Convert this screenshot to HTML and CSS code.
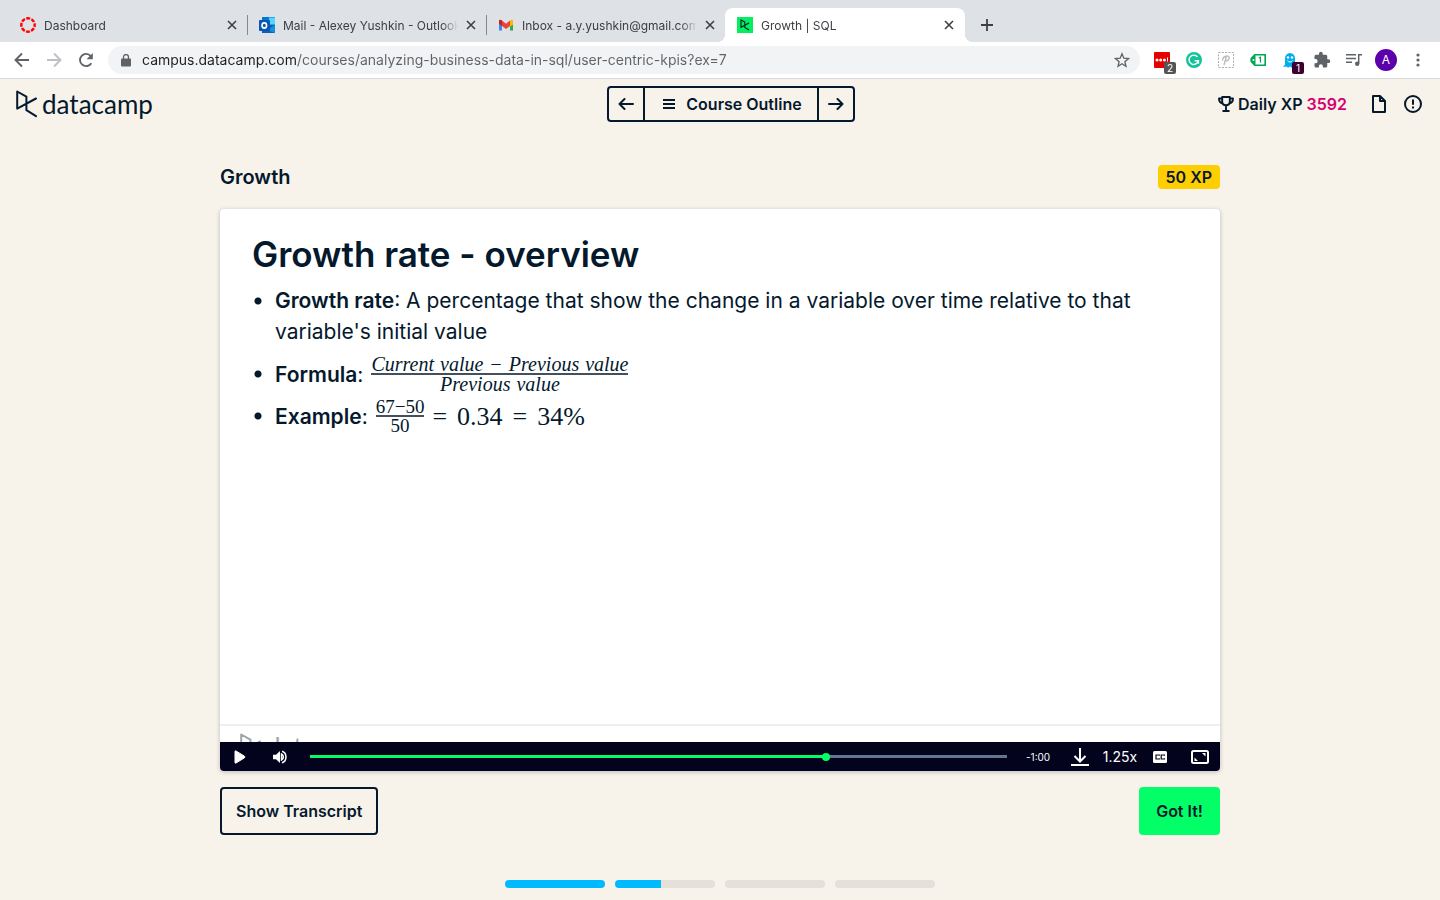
FILE: index.html
```html
<!DOCTYPE html>
<html lang="en">
<head>
<meta charset="utf-8">
<meta name="viewport" content="width=device-width, initial-scale=1">
<title>Growth | SQL</title>
<link rel="stylesheet" href="styles.css">
</head>
<body>
<svg class="defs" aria-hidden="true">
  <symbol id="mark" viewBox="0 0 22 28"><path d="M20 8.500 1.200 18.600V1.500l9.200 5.100v13.600l9.600 6" fill="none" stroke="currentColor" stroke-width="2" stroke-linejoin="round" stroke-linecap="round"/></symbol>
  <symbol id="close" viewBox="0 0 10 10"><path d="M1 1l8 8M9 1 1 9" stroke="currentColor" stroke-width="1.600" fill="none"/></symbol>
</svg>

<div class="tabs">
  <div class="tab">
    <svg class="tab-icon" viewBox="0 0 16 16"><circle cx="8" cy="8" r="6.700" fill="none" stroke="#f00" stroke-width="2.400" stroke-dasharray="3.900 1.360" stroke-dashoffset="1.950"/></svg>
    <button class="tab-name">Dashboard</button>
    <button class="tab-close" aria-label="Close Dashboard"><svg viewBox="0 0 10 10"><use href="#close"/></svg></button>
  </div>
  <div class="tab divided">
    <svg class="tab-icon" viewBox="0 0 16 16"><path fill="#28a8ea" d="M3 0h13v16H3z"/><path fill="#0078d4" d="M3 0h7v5H3z"/><path fill="#50d9ff" d="M10 1h6v6h-6z"/><path fill="#0f5fb5" d="M8 8h8v8H3v-3z"/><path fill="#1490df" d="m16 8-8 5 8 3z"/><rect y="3" width="11" height="11" rx="1" fill="#0a56b0"/><ellipse cx="5.300" cy="8.500" rx="2.300" ry="2.600" fill="none" stroke="#fff" stroke-width="1.600"/></svg>
    <button class="tab-name">Mail - Alexey Yushkin - Outlook</button>
    <button class="tab-close" aria-label="Close Mail"><svg viewBox="0 0 10 10"><use href="#close"/></svg></button>
  </div>
  <div class="tab divided">
    <svg class="tab-icon" viewBox="0 0 16 16"><path fill="#4285f4" d="M1 4v9.500h3V7z"/><path fill="#34a853" d="M15 4v9.500h-3V7z"/><path fill="#fbbc04" d="M12 4.200 15 3v4.500l-3 2z"/><path fill="#ea4335" d="M4 3.500 8 6.700l4-3.200V9L8 12 4 9z"/><path fill="#c5221f" d="M1 4c0-1.700 1.700-1.700 3-.5V9L1 6.800z"/><path fill="#fbbc04" d="M15 4c0-1.700-1.700-1.700-3-.5V9l3-2.200z"/></svg>
    <button class="tab-name">Inbox - a.y.yushkin@gmail.com</button>
    <button class="tab-close" aria-label="Close Inbox"><svg viewBox="0 0 10 10"><use href="#close"/></svg></button>
  </div>
  <div class="tab active">
    <svg class="tab-icon" viewBox="0 0 16 16"><path fill="#03ef62" d="M0 0h16v16H0z"/><path d="m12 6-8 4.300V3l3.800 2.100v5.300L12 13" fill="none" stroke="#05192d" stroke-width="1.100"/></svg>
    <button class="tab-name">Growth | SQL</button>
    <button class="tab-close" aria-label="Close Growth"><svg viewBox="0 0 10 10"><use href="#close"/></svg></button>
  </div>
  <button class="new-tab" aria-label="New tab"><svg viewBox="0 0 12 12"><path d="M6 0v12M0 6h12" stroke="currentColor" stroke-width="1.800"/></svg></button>
</div>

<div class="toolbar">
  <div class="tools">
    <button class="tool" aria-label="Back"><svg viewBox="0 0 16 16" width="16" height="16"><path d="M15 8H2M8 1.500 1.500 8 8 14.500" fill="none" stroke="currentColor" stroke-width="1.900"/></svg></button>
    <button class="tool faded" aria-label="Forward"><svg viewBox="0 0 16 16" width="16" height="16"><path d="M1 8h13M8 1.500 14.500 8 8 14.500" fill="none" stroke="currentColor" stroke-width="1.900"/></svg></button>
    <button class="tool" aria-label="Reload"><svg viewBox="0 0 16 16" width="16" height="16"><path d="M13.300 11.200A6.100 6.100 0 1 1 12.700 4" fill="none" stroke="currentColor" stroke-width="1.900"/><path d="M14.800 1v6.200H8.600z" fill="currentColor"/></svg></button>
  </div>
  <div class="omnibox">
    <svg viewBox="0 0 10 13" width="10" height="13"><rect y="4.500" width="10" height="8" rx="1" fill="#5f6368"/><path d="M2.500 5V3a2.500 2.500 0 0 1 5 0v2" fill="none" stroke="#5f6368" stroke-width="1.300"/></svg>
    <input class="url" type="text" aria-label="Address" value="campus.datacamp.com/courses/analyzing-business-data-in-sql/user-centric-kpis?ex=7">
    <button class="star" aria-label="Bookmark"><svg viewBox="0 0 16 16" width="16" height="16"><path d="m8 1.800 1.800 4.400 4.700.4-3.600 3.100 1.100 4.600L8 11.800l-4 2.500 1.100-4.600L1.500 6.600l4.700-.4z" fill="none" stroke="#5f6368" stroke-width="1.300"/></svg></button>
  </div>
  <div class="tools">
    <button class="tool" aria-label="Password manager"><svg viewBox="0 0 16 16" width="16" height="16"><rect width="16" height="16" rx="1" fill="#e60000"/><g fill="#fff"><circle cx="3" cy="8" r="1.500"/><circle cx="6.700" cy="8" r="1.500"/><circle cx="10.400" cy="8" r="1.500"/><path d="M13 5.500h1v4h-1z"/></g></svg><span class="count">2</span></button>
    <button class="tool" aria-label="Writing check"><svg viewBox="0 0 16 16" width="16" height="16"><circle cx="8" cy="8" r="8" fill="#15c39a"/><path d="M11.500 4.900A4.700 4.700 0 1 0 12.400 8.700H8.700M12.400 8.700v3" fill="none" stroke="#fff" stroke-width="1.400"/></svg></button>
    <button class="tool" aria-label="Page tool"><svg viewBox="0 0 16 16" width="16" height="16"><rect x=".5" y=".5" width="15" height="15" fill="none" stroke="#aaa" stroke-dasharray="2 1.300"/><path d="m6 13 2.300-8M4.600 8.600C4.300 3.800 11.600 2.600 11.300 6c-.2 2.800-3.200 3-4.300 2.500" fill="none" stroke="#bbb" stroke-width="1.400"/></svg></button>
    <button class="tool" aria-label="Tag tool"><svg viewBox="0 0 16 16" width="16" height="16"><path d="M4.800 2.800h10.400v10.400H4.800L1.200 9.400V6.600z" fill="#fff" stroke="#00a651" stroke-width="1.600"/><path d="M5.500 3v10L1 9.500v-3z" fill="#00a651"/><circle cx="3.500" cy="8" r="1" fill="#fff"/><path d="m8.800 6 1.600-.8v5.300" fill="none" stroke="#00a651" stroke-width="1.200"/></svg></button>
    <button class="tool" aria-label="Tracker blocker"><svg viewBox="0 0 16 16" width="16" height="16"><path d="M3 6.500a5 5.500 0 0 1 10 0V13l1 2-2.500-.5-1.700 1.300L8 14.500l-2 1.300-1.500-1.300L1 15l2-2.500z" fill="#00aef0"/><circle cx="6" cy="5.500" r="1.200" fill="#fff"/><circle cx="10" cy="5.500" r="1.200" fill="#fff"/><path d="M5.500 8.500c1 2 4 2 5 0" fill="none" stroke="#fff"/></svg><span class="count plum">1</span></button>
    <button class="tool" aria-label="Extensions"><svg viewBox="0 0 24 24" width="18" height="18"><path fill="currentColor" d="M20.500 11H19V7a2 2 0 0 0-2-2h-4V3.500a2.500 2.500 0 0 0-5 0V5H4a2 2 0 0 0-2 2v3.800h1.500a2.700 2.700 0 0 1 0 5.400H2V20a2 2 0 0 0 2 2h3.800v-1.500a2.700 2.700 0 0 1 5.400 0V22H17a2 2 0 0 0 2-2v-4h1.500a2.500 2.500 0 0 0 0-5z"/></svg></button>
    <button class="tool" aria-label="Media"><svg viewBox="0 0 16 16" width="16" height="16"><path d="M0 2.800h10M0 6.500h10M0 10.200h6" stroke="currentColor" stroke-width="1.500"/><path d="M12.700 11.500V2.800H16" fill="none" stroke="currentColor" stroke-width="1.500"/><circle cx="11.200" cy="11.800" r="2.200" fill="currentColor"/></svg></button>
    <button class="tool" aria-label="Profile"><span class="avatar">A</span></button>
    <button class="tool" aria-label="Menu"><svg viewBox="0 0 4 14" width="4" height="14"><g fill="currentColor"><circle cx="2" cy="2" r="1.600"/><circle cx="2" cy="7" r="1.600"/><circle cx="2" cy="12" r="1.600"/></g></svg></button>
  </div>
</div>

<header class="header">
  <a class="logo" href="#"><svg viewBox="0 0 22 28" width="22" height="28"><use href="#mark"/></svg><span>datacamp</span></a>
  <nav class="course-nav" aria-label="Course">
    <button class="step" aria-label="Previous"><svg viewBox="0 0 16 12" width="16" height="12"><path d="M15 6H1.500M6.500 1l-5 5 5 5" fill="none" stroke="currentColor" stroke-width="2" stroke-linecap="round" stroke-linejoin="round"/></svg></button>
    <button class="outline"><svg viewBox="0 0 12 10" width="12" height="10"><path d="M0 1h12M0 5h12M0 9h12" stroke="currentColor" stroke-width="2"/></svg>Course Outline</button>
    <button class="step" aria-label="Next"><svg viewBox="0 0 16 12" width="16" height="12"><path d="M1 6h13.500M9.500 1l5 5-5 5" fill="none" stroke="currentColor" stroke-width="2" stroke-linecap="round" stroke-linejoin="round"/></svg></button>
  </nav>
  <div class="status">
    <span class="xp"><svg viewBox="0 0 16 16" width="16" height="16"><path d="M4.200 1h7.600v4.500c0 5-7.600 5-7.600 0zM4 2.500H1c0 3 1 4.500 3.800 5M12 2.500h3c0 3-1 4.500-3.800 5M8 9.500V15M4.500 15h7" fill="none" stroke="currentColor" stroke-width="1.900" stroke-linejoin="round"/></svg><span>Daily XP <b class="score">3592</b></span></span>
    <button class="plain" aria-label="Notes"><svg viewBox="0 0 14 18" width="14" height="18"><path d="M1 1h7l5 5v11H1zM8 1v5h5" fill="none" stroke="currentColor" stroke-width="2" stroke-linejoin="round"/></svg></button>
    <button class="plain" aria-label="Report an issue"><svg viewBox="0 0 18 18" width="18" height="18"><circle cx="9" cy="9" r="8" fill="none" stroke="currentColor" stroke-width="2"/><path d="M9 4.500v5.300M9 11.500v2" stroke="currentColor" stroke-width="2"/></svg></button>
  </div>
</header>

<main class="lesson">
  <div class="lesson-head"><h2>Growth</h2><span class="badge">50 XP</span></div>
  <section class="player">
    <div class="slide">
      <h1>Growth rate - overview</h1>
      <ul>
        <li class="prose"><b>Growth rate</b>: A percentage that show the change in a variable over time relative to that variable's initial value</li>
        <li><span><b>Formula</b>:</span>
          <span class="frac words"><span class="top"><i>Current</i><i>value</i><i>−</i><i>Previous</i><i>value</i></span><span class="bottom"><i>Previous</i><i>value</i></span></span></li>
        <li><span><b>Example</b>:</span>
          <span class="frac"><span class="top">67−50</span><span class="bottom">50</span></span>
          <span class="math"><span>=</span><span>0.34</span><span>=</span><span>34%</span></span></li>
      </ul>
    </div>
    <div class="slide-foot"><svg viewBox="0 0 22 28" width="22" height="28"><use href="#mark"/></svg><span>datacamp</span></div>
    <div class="controls">
      <button aria-label="Play"><svg viewBox="0 0 12 14" width="12" height="14"><path d="M1 1.500Q1 .5 2 1l8.500 5.200q1 .8 0 1.600L2 13q-1 .5-1-.5z" fill="currentColor" stroke="currentColor"/></svg></button>
      <button aria-label="Volume"><svg viewBox="0 0 14 14" width="14" height="14"><path d="M0 4.700h3L7 1v12L3 9.300H0z" fill="currentColor"/><path d="M8.500 4v6c2.500-1 2.500-5 0-6zM9 1.200c5.300 1.600 5.300 10 0 11.600" fill="none" stroke="currentColor" stroke-width="1.500"/></svg></button>
      <input class="seek" type="range" min="0" max="1000" value="743" aria-label="Seek">
      <span class="time">-1:00</span>
      <button aria-label="Download"><svg viewBox="0 0 18 18" width="18" height="18"><path d="M9 0v13M3.500 8 9 13.500 14.500 8M0 17h18" fill="none" stroke="currentColor" stroke-width="2"/></svg></button>
      <button class="speed">1.25x</button>
      <button aria-label="Captions"><svg viewBox="0 0 14 12" width="14" height="12"><rect width="14" height="12" rx="1.500" fill="currentColor"/><path d="M6.300 4.800V4H3v4h3.300v-.8M11.500 4.800V4H8.200v4h3.300v-.8" fill="none" stroke="#05051f" stroke-width="1.200"/></svg></button>
      <button aria-label="Full screen"><svg viewBox="0 0 18 14" width="18" height="14"><rect x="1" y="1" width="16" height="12" rx="1.500" fill="none" stroke="currentColor" stroke-width="2"/><path d="M3.500 7.500V11H7zM14.500 6.500V3H11z" fill="currentColor"/></svg></button>
    </div>
  </section>
  <div class="actions"><button class="ghost">Show Transcript</button><button class="primary">Got It!</button></div>
</main>

<footer class="progress">
  <div class="bar"><div class="fill" style="width:100%"></div></div>
  <div class="bar"><div class="fill" style="width:46%"></div></div>
  <div class="bar"></div>
  <div class="bar"></div>
</footer>
</body>
</html>
```
FILE: styles.css
```css
* { box-sizing: border-box; }
body {
  margin: 0;
  min-height: 100vh;
  display: flex;
  flex-direction: column;
  background: #f7f3eb;
  color: #05192d;
  font-family: Inter, "Liberation Sans", sans-serif;
}
button { font: inherit; color: inherit; background: none; border: 0; padding: 0; cursor: pointer; }
svg { display: block; flex: none; }
.defs { width: 0; height: 0; position: absolute; }

/* Browser tabs */
.tabs { display: flex; align-items: flex-end; height: 42px; padding-left: 8px; background: #dee1e6; color: #3c4043; }
.tab {
  display: flex;
  align-items: center;
  flex: 0 1 239px;
  min-width: 0;
  height: 34px;
  padding: 0 10px 0 12px;
  gap: 8px;
  font-size: 12px;
}
.tab.divided { background: linear-gradient(#85888c, #85888c) 0 50% / 1px 20px no-repeat; }
.tab.active { position: relative; flex-basis: 240px; padding-right: 11px; background: #fff; border-radius: 8px 8px 0 0; }
.tab.active::before, .tab.active::after { content: ""; position: absolute; bottom: 0; width: 8px; height: 8px; }
.tab.active::before { right: 100%; background: radial-gradient(circle at 0 0, #dee1e6 8px, #fff 8px); }
.tab.active::after { left: 100%; background: radial-gradient(circle at 100% 0, #dee1e6 8px, #fff 8px); }
.tab-icon { width: 16px; height: 16px; }
.tab-name {
  flex: 1;
  min-width: 0;
  overflow: hidden;
  white-space: nowrap;
  text-align: left;
  -webkit-mask-image: linear-gradient(to right, #000 calc(100% - 16px), transparent);
  mask-image: linear-gradient(to right, #000 calc(100% - 16px), transparent);
}
.tab-close svg { width: 10px; height: 10px; }
.new-tab { align-self: center; margin: 8px 0 0 16px; }
.new-tab svg { width: 12px; height: 12px; }

/* Address bar */
.toolbar { display: flex; align-items: center; gap: 6px; height: 37px; padding: 0 6px; background: #fff; border-bottom: 1px solid #d9dbdf; color: #5f6368; }
.tools { display: flex; }
.tool { position: relative; width: 32px; height: 28px; display: grid; place-items: center; }
.tool.faded { color: #bdc1c6; }
.omnibox { flex: 1; display: flex; align-items: center; gap: 11px; height: 28px; padding: 0 10px 0 13px; border-radius: 14px; background: #f1f3f4; }
.url {
  flex: 1;
  min-width: 0;
  border: 0;
  padding: 0;
  outline: 0;
  font: 14px/20px Inter, "Liberation Sans", sans-serif;
  color: transparent;
  background: linear-gradient(to right, #202124 156px, #5f6368 156px);
  -webkit-background-clip: text;
  background-clip: text;
}
.count { position: absolute; left: 18px; top: 16px; width: 12px; height: 12px; border-radius: 2px; background: #555; color: #fff; font-size: 10px; line-height: 12px; text-align: center; }
.count.plum { background: #3b0030; }
.avatar { width: 22px; height: 22px; border-radius: 50%; background: #5c00ab; color: #fff; font-size: 12px; line-height: 22px; text-align: center; }

/* Site header */
.header { display: grid; grid-template-columns: 1fr auto 1fr; align-items: center; height: 50px; padding: 0 18px 0 16px; font-size: 16px; font-weight: 600; }
.logo { display: flex; align-items: center; gap: 4px; color: inherit; text-decoration: none; }
.logo span, .slide-foot span { font: 26px/28px Lato, "Liberation Sans", sans-serif; }
.course-nav { display: flex; margin-left: 24px; height: 36px; border: 2px solid #05192d; border-radius: 4px; }
.step { display: grid; place-items: center; width: 34px; }
.outline { display: flex; align-items: center; gap: 11px; padding: 0 15px 0 18px; border: solid #05192d; border-width: 0 2px; }
.status { display: flex; align-items: center; justify-content: flex-end; gap: 18px; }
.xp { display: flex; align-items: center; gap: 4px; margin-right: 7px; white-space: nowrap; }
.score { font-weight: inherit; color: #d6006e; }

/* Lesson */
.lesson { width: 100%; max-width: 1000px; margin: 0 auto; padding-top: 36px; }
.lesson-head { display: flex; align-items: center; justify-content: space-between; height: 24px; margin-bottom: 20px; }
h2 { margin: 0; font-size: 20px; line-height: 24px; font-weight: 600; }
.badge { padding: 0 8px; border-radius: 4px; background: #ffce00; font-size: 16px; line-height: 24px; font-weight: 600; }
.player { display: flex; flex-direction: column; aspect-ratio: 1000 / 562; overflow: hidden; border-radius: 4px; background: #fff; box-shadow: 0 1px 4px rgba(5, 25, 45, .25); }
.slide { flex: 1; padding: 24px 32px 0; font-size: 21px; line-height: 31px; }
h1 { margin: 0 0 10px; font-size: 35px; line-height: 42px; font-weight: 600; }
.slide ul { margin: 0; padding: 0; list-style: none; }
.slide b { font-weight: 600; }
.slide li { display: flex; align-items: center; gap: 8px; height: 42px; padding-left: 23px; background: radial-gradient(circle, #05192d 3px, transparent 4px) 1px 50% / 10px 10px no-repeat; }
.slide .prose { display: block; height: auto; padding-bottom: 6px; background-position: 1px 11px; }
.frac { display: grid; justify-items: center; font: 19px/18px "Liberation Serif", serif; }
.frac.words { font-size: 20px; }
.top, .bottom { display: flex; gap: 6px; }
.top { width: 100%; justify-content: center; border-bottom: 2px solid #43505f; line-height: 17px; }
.math { display: flex; gap: 10px; font: 26px/31px "Liberation Serif", serif; }
.slide-foot { display: flex; align-items: flex-start; gap: 4px; height: 18px; padding: 7px 20px 0; overflow: hidden; border-top: 2px solid #eee; color: #9ba3ab; }
.controls { display: flex; align-items: center; height: 29px; background: #03031e; color: #fff; }
.controls button { width: 40px; height: 29px; display: grid; place-items: center; }
.controls .speed { font-size: 14px; }
.time { width: 53px; padding-left: 19px; font-size: 10px; }
.seek { flex: 1; min-width: 0; height: 8px; margin: 0 0 0 10px; appearance: none; background: linear-gradient(to right, #03ff68 74%, #65748f 74%) 0 50% / 100% 3px no-repeat; }
.seek::-webkit-slider-thumb { appearance: none; width: 8px; height: 8px; border-radius: 50%; background: #03ff68; }
.actions { display: flex; justify-content: space-between; margin-top: 16px; font-size: 16px; font-weight: 600; }
.actions button { height: 48px; border-radius: 4px; }
.actions .ghost { padding: 0 14px; border: 2px solid #05192d; }
.actions .primary { padding: 0 17px; background: #03ff68; }
.progress { display: flex; justify-content: center; gap: 10px; margin-top: auto; padding: 12px; }
.bar { flex: 0 1 100px; height: 8px; border-radius: 4px; background: #e5e1da; overflow: hidden; }
.fill { height: 8px; background: #00baff; }
```
